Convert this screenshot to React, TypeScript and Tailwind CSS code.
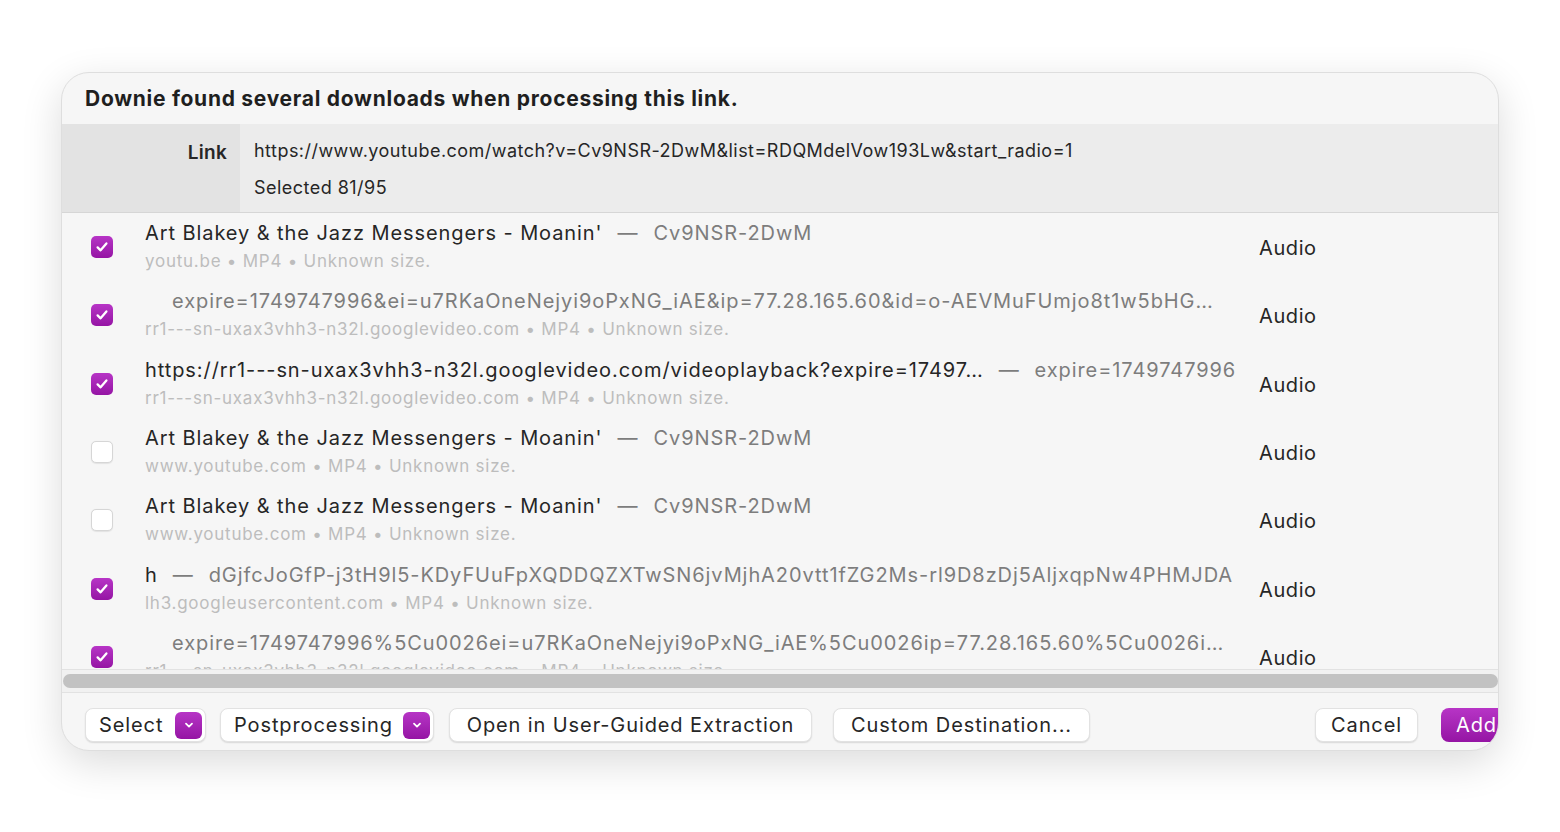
import React from "react";

type Row = {
  checked: boolean;
  main?: string;
  secondary?: string;
  indented?: string;
  sub: string;
};

const rows: Row[] = [
  {
    checked: true,
    main: "Art Blakey & the Jazz Messengers - Moanin'",
    secondary: "Cv9NSR-2DwM",
    sub: "youtu.be • MP4 • Unknown size.",
  },
  {
    checked: true,
    indented:
      "expire=1749747996&ei=u7RKaOneNejyi9oPxNG_iAE&ip=77.28.165.60&id=o-AEVMuFUmjo8t1w5bHG…",
    sub: "rr1---sn-uxax3vhh3-n32l.googlevideo.com • MP4 • Unknown size.",
  },
  {
    checked: true,
    main: "https://rr1---sn-uxax3vhh3-n32l.googlevideo.com/videoplayback?expire=17497…",
    secondary: "expire=1749747996",
    sub: "rr1---sn-uxax3vhh3-n32l.googlevideo.com • MP4 • Unknown size.",
  },
  {
    checked: false,
    main: "Art Blakey & the Jazz Messengers - Moanin'",
    secondary: "Cv9NSR-2DwM",
    sub: "www.youtube.com • MP4 • Unknown size.",
  },
  {
    checked: false,
    main: "Art Blakey & the Jazz Messengers - Moanin'",
    secondary: "Cv9NSR-2DwM",
    sub: "www.youtube.com • MP4 • Unknown size.",
  },
  {
    checked: true,
    main: "h",
    secondary:
      "dGjfcJoGfP-j3tH9l5-KDyFUuFpXQDDQZXTwSN6jvMjhA20vtt1fZG2Ms-rl9D8zDj5AljxqpNw4PHMJDA",
    sub: "lh3.googleusercontent.com • MP4 • Unknown size.",
  },
  {
    checked: true,
    indented:
      "expire=1749747996%5Cu0026ei=u7RKaOneNejyi9oPxNG_iAE%5Cu0026ip=77.28.165.60%5Cu0026i…",
    sub: "rr1---sn-uxax3vhh3-n32l.googlevideo.com • MP4 • Unknown size.",
  },
];

function CheckBox({ checked }: { checked: boolean }) {
  if (!checked) {
    return (
      <div className="h-[22px] w-[22px] shrink-0 rounded-[5px] border border-[#d6d6d6] bg-white shadow-[0_0.5px_1px_rgba(0,0,0,0.08)]" />
    );
  }
  return (
    <div className="flex h-[22px] w-[22px] shrink-0 items-center justify-center rounded-[5px] bg-gradient-to-b from-[#b734c6] to-[#9514a4]">
      <svg width="14" height="14" viewBox="0 0 14 14" fill="none">
        <path
          d="M2.6 7.4 L5.6 10.3 L11.4 3.4"
          stroke="white"
          strokeWidth="2.3"
          strokeLinecap="round"
          strokeLinejoin="round"
        />
      </svg>
    </div>
  );
}

function Chevron() {
  return (
    <div className="flex h-[27px] w-[27px] items-center justify-center rounded-[6px] bg-gradient-to-b from-[#b734c6] to-[#9514a4]">
      <svg width="12" height="12" viewBox="0 0 12 12" fill="none">
        <path
          d="M3 4.6 L6 7.6 L9 4.6"
          stroke="white"
          strokeWidth="1.8"
          strokeLinecap="round"
          strokeLinejoin="round"
        />
      </svg>
    </div>
  );
}

function ListRow({ row }: { row: Row }) {
  return (
    <div className="flex h-[68.3px] shrink-0 items-center">
      <div className="ml-[29px]">
        <CheckBox checked={row.checked} />
      </div>
      <div className="ml-[32px] flex w-[1097px] flex-col gap-[4px]">
        <div className="flex h-[24px] items-center whitespace-nowrap text-[20px] leading-[24px] tracking-[0.92px]">
          {row.indented ? (
            <span className="overflow-hidden pl-[27px] text-[#7d7d7d]">{row.indented}</span>
          ) : (
            <>
              <span className="text-[#262626]">{row.main}</span>
              <span className="mx-[15px] text-[#7d7d7d]">—</span>
              <span className="overflow-hidden text-[#7d7d7d]">{row.secondary}</span>
            </>
          )}
        </div>
        <div className="h-[24px] whitespace-nowrap text-[17px] leading-[24px] tracking-[0.75px] text-[#bdbdbd]">
          {row.sub}
        </div>
      </div>
      <div className="ml-[17px] mt-[2px] text-[20px] tracking-[0.6px] text-[#262626]">Audio</div>
    </div>
  );
}

function Button({
  label,
  width,
  menu,
}: {
  label: string;
  width: string;
  menu?: boolean;
}) {
  return (
    <div
      className={`flex h-[34px] ${width} shrink-0 items-center ${
        menu ? "justify-between pl-[13px] pr-[3px]" : "justify-center"
      } rounded-[8px] border border-[#e2e2e2] bg-white text-[20px] tracking-[0.9px] text-[#262626] shadow-[0_1px_1.5px_rgba(0,0,0,0.12)]`}
    >
      <span>{label}</span>
      {menu && <Chevron />}
    </div>
  );
}

export default function App() {
  return (
    <div
      className="h-[832px] w-[1560px] bg-white"
      style={{ fontFamily: "Inter, 'Noto Sans', sans-serif" }}
    >
      <div className="pl-[61px] pt-[72px]">
        <div className="flex h-[679px] w-[1438px] flex-col overflow-hidden rounded-[28px] border border-[#dedede] bg-[#f6f6f6] shadow-[0_12px_40px_rgba(0,0,0,0.14)]">
          {/* header */}
          <div className="flex h-[51px] shrink-0 items-center pl-[23px] text-[21px] font-bold tracking-[0.72px] text-[#1f1f1f]">
            Downie found several downloads when processing this link.
          </div>

          {/* link info */}
          <div className="flex h-[89px] shrink-0 border-b border-[#d6d6d6] bg-[#ececec]">
            <div className="w-[178px] shrink-0 bg-[#e3e3e3] pr-[13px] pt-[15px] text-right text-[19px] font-semibold tracking-[0.3px] text-[#262626]">
              Link
            </div>
            <div className="flex flex-col pl-[14px] pt-[15px] text-[18px] tracking-[0.47px] text-[#262626]">
              <div className="h-[24px] leading-[24px]">
                https://www.youtube.com/watch?v=Cv9NSR-2DwM&list=RDQMdelVow193Lw&start_radio=1
              </div>
              <div className="mt-[13px] h-[24px] leading-[24px]">Selected 81/95</div>
            </div>
          </div>

          {/* list */}
          <div className="flex h-[456px] shrink-0 flex-col overflow-hidden">
            {rows.map((row, i) => (
              <ListRow key={i} row={row} />
            ))}
          </div>

          {/* horizontal scroller */}
          <div className="flex h-[24px] shrink-0 items-center border-y border-[#e2e2e2] bg-[#f1f1f1] pl-[1px]">
            <div className="h-[14px] w-full rounded-full bg-[#c2c2c2]" />
          </div>

          {/* buttons */}
          <div className="flex flex-1 items-start pl-[23px] pt-[15px]">
            <Button label="Select" width="w-[121px]" menu />
            <div className="ml-[14px]">
              <Button label="Postprocessing" width="w-[214px]" menu />
            </div>
            <div className="ml-[15px]">
              <Button label="Open in User-Guided Extraction" width="w-[363px]" />
            </div>
            <div className="ml-[21px]">
              <Button label="Custom Destination..." width="w-[257px]" />
            </div>
            <div className="ml-[225px]">
              <Button label="Cancel" width="w-[103px]" />
            </div>
            <div className="ml-[23px] flex h-[34px] w-[80px] shrink-0 items-center rounded-[8px] bg-gradient-to-b from-[#b734c6] to-[#9514a4] pl-[15px] text-[20px] tracking-[0.9px] text-white">
              Add
            </div>
          </div>
        </div>
      </div>
    </div>
  );
}
